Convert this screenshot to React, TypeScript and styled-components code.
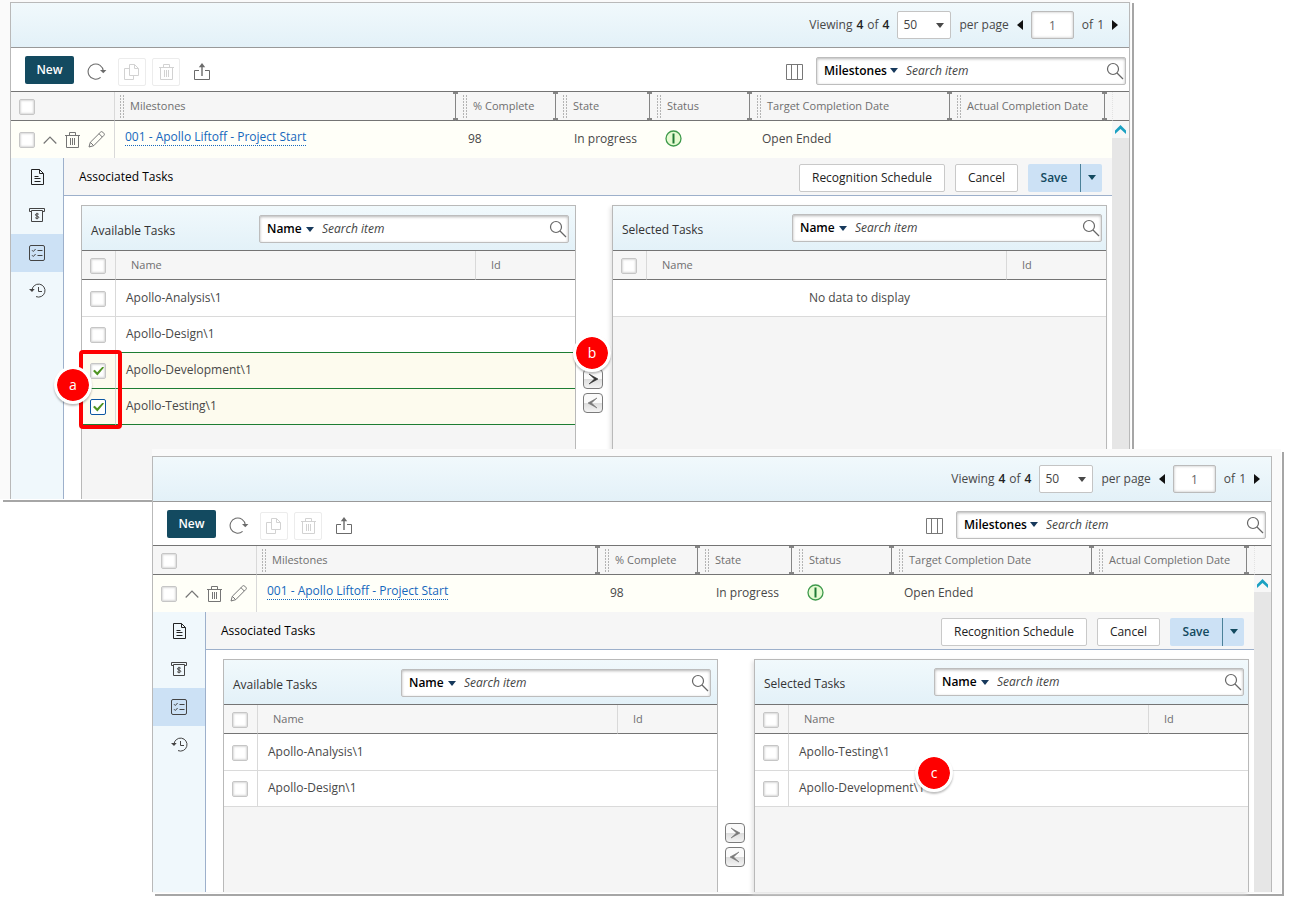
import React, { useId } from "react";
import styled, { createGlobalStyle, css } from "styled-components";

const GlobalStyle = createGlobalStyle`
  *, *::before, *::after { box-sizing: border-box; }
  body {
    margin: 0;
    background: #fff;
    color: #484848;
    font: 12px/16px "Open Sans", "Noto Sans", sans-serif;
  }
  button, input, select { font: inherit; color: inherit; margin: 0; }
  svg { display: block; flex: none; }
`;

/* ---------- page and windows ---------- */

const Stage = styled.main`
  display: flex;
  flex-direction: column;
  min-width: 1100px;
  padding-bottom: 14px;
`;

const Frame = styled.section<{ $front?: boolean }>`
  position: relative;
  background: #fafafa;
  box-shadow: 1px 1px 0 #fff, 3px 3px 0 #a6a6a6;
  margin: ${(p) => (p.$front ? "-50px 14px 0 152px" : "0 164px 0 0")};
  padding: ${(p) => (p.$front ? "7px 9px 1px 0" : "2px 1px 0 10px")};
`;

const Window = styled.div`
  background: #fff;
  border: 1px solid #b9b9b9;
  border-bottom: 0;
`;

const PagerBar = styled.div`
  display: flex;
  align-items: center;
  justify-content: flex-end;
  gap: 8px;
  height: 45px;
  padding: 0 11px;
  border-bottom: 1px solid #999;
  background: linear-gradient(#f1f9fc, #e3f1f8);
`;

const PagerText = styled.span`
  display: flex;
  gap: 4px;
  white-space: nowrap;
  b { font-weight: 600; color: #222; }
`;

const PageSize = styled.span`
  display: flex;
  align-items: center;
  width: 54px;
  height: 28px;
  padding: 0 6px 0 0;
  border: 1px solid #c4c4c4;
  border-radius: 2px;
  background: #fff;
`;

const PlainSelect = styled.select<{ $strong?: boolean; $width: number }>`
  appearance: none;
  width: ${(p) => p.$width}px;
  flex: none;
  border: 0;
  padding: 0 0 0 ${(p) => (p.$strong ? 7 : 5)}px;
  background: transparent;
  outline: none;
  font-weight: ${(p) => (p.$strong ? 600 : 400)};
  color: ${(p) => (p.$strong ? "#000" : "#444")};
`;

const PageInput = styled.input`
  width: 43px;
  height: 28px;
  border: 1px solid #bbb;
  border-radius: 2px;
  background: #fff;
  box-shadow: inset 0 0 3px #bbb;
  color: #666;
  text-align: center;
  padding: 0;
`;

const ArrowButton = styled.button`
  border: 0;
  padding: 0;
  background: none;
  color: #111;
`;

const Toolbar = styled.div<{ $inset: number }>`
  display: flex;
  align-items: center;
  height: 44px;
  padding: 0 ${(p) => p.$inset}px 0 14px;
  border-bottom: 1px solid #747474;
`;

const NewButton = styled.button`
  width: 49px;
  height: 28px;
  border: 0;
  border-radius: 2px;
  background: #134a60;
  color: #fff;
  font-weight: 600;
  padding: 0;
`;

const ToolGroup = styled.div`
  display: flex;
  align-items: center;
  gap: 6px;
  flex: 1;
  padding: 4px 0 0 7px;
`;

const ToolEnd = styled.div`
  display: flex;
  align-items: center;
  gap: 6px;
  padding-top: 2px;
`;

const ToolButton = styled.button<{ $framed?: boolean }>`
  display: flex;
  align-items: center;
  justify-content: center;
  width: ${(p) => (p.$framed ? 28 : 31)}px;
  height: 28px;
  padding: 0;
  border: 1px solid ${(p) => (p.$framed ? "#ececec" : "transparent")};
  border-radius: 2px;
  background: none;
  color: ${(p) => (p.$framed ? "#d2d2d2" : "#6b6b6b")};
`;

const ColumnsButton = styled(ToolButton)`
  padding-top: 2px;
  color: #777;
`;

const SearchBox = styled.div`
  display: flex;
  align-items: center;
  width: 310px;
  height: 28px;
  border: 1px solid #bdbdbd;
  border-radius: 2px;
  background: #fff;
  box-shadow: inset 0 1px 3px #b5b5b5;
  padding-right: 1px;
  color: #17395c;
`;

const SearchInput = styled.input`
  flex: 1;
  min-width: 0;
  border: 0;
  outline: none;
  background: transparent;
  padding: 0 0 0 8px;
  &::placeholder { color: #444; font-style: italic; opacity: 1; }
`;

const SearchButton = styled.button`
  border: 0;
  padding: 0;
  background: none;
  color: #666;
`;

/* ---------- milestones table ---------- */

const DataTable = styled.table`
  width: 100%;
  table-layout: fixed;
  border-collapse: separate;
  border-spacing: 0;
  th, td { padding: 0; text-align: left; font-weight: 400; }
`;

const HeadCell = styled.th<{ $handle?: boolean; $ruled?: boolean }>`
  position: relative;
  height: 29px;
  background: #f6f6f6;
  color: #6f6f6f;
  font-size: 11px;
  border-bottom: 1px solid #747474;
  ${(p) => p.$ruled && css`border-right: 1px solid #d9d9d9;`}
  ${(p) => p.$handle && css`
    border-right: 1px solid #858585;
    &::before, &::after {
      content: "";
      position: absolute;
      right: -3px;
      width: 5px;
      height: 2px;
      background: #858585;
      z-index: 1;
    }
    &::before { top: 0; }
    &::after { bottom: 0; }
  `}
`;

const HeadLabel = styled.div<{ $first?: boolean }>`
  display: flex;
  align-items: center;
  gap: 5px;
  padding-left: ${(p) => (p.$first ? 5 : 7)}px;
  white-space: nowrap;
`;

const ScrollHead = styled(HeadCell)`
  border-left: 1px dotted #e2e2e2;
`;

const RowCell = styled.td<{ $pad?: number; $ruled?: boolean; $lift?: number }>`
  && {
    padding-left: ${(p) => p.$pad ?? 0}px;
    padding-bottom: ${(p) => p.$lift ?? 2}px;
  }
  height: 37px;
  background: #fffff8;
  white-space: nowrap;
  ${(p) => p.$ruled && css`border-right: 1px solid #d9d9d9;`}
`;

const RowActions = styled.div`
  display: flex;
  align-items: center;
  gap: 8px;
  padding: 2px 0 0 8px;
  color: #777;
`;

const RowAction = styled.button`
  border: 0;
  padding: 0;
  background: none;
  color: #757575;
`;

const CheckCell = styled.div`
  padding: 2px 0 0 8px;
  display: flex;
`;

const CheckBox = styled.input<{ $focused?: boolean }>`
  appearance: none;
  flex: none;
  width: 16px;
  height: 16px;
  border: 1px solid ${(p) => (p.$focused ? "#0d57a3" : "#c6c6c6")};
  border-radius: 2px;
  background: #fff;
  box-shadow: ${(p) => (p.$focused ? "none" : "inset 0 0 2px 1px #d9d9d9")};
  &:checked::after {
    content: "";
    display: block;
    width: 11px;
    height: 9px;
    margin: 3px 0 0 2px;
    background: #4f9422;
    clip-path: polygon(0 50%, 16% 36%, 38% 64%, 88% 0, 100% 12%, 40% 100%);
  }
`;

const MilestoneLink = styled.a`
  display: inline-block;
  color: #1668bd;
  text-decoration: none;
  border-bottom: 1px dotted #1668bd;
  line-height: 16px;
`;

const ScrollTrack = styled.td`
  vertical-align: top;
  background: #e6e6e6;
`;

const ScrollUp = styled.button`
  display: flex;
  align-items: center;
  justify-content: center;
  width: 100%;
  height: 17px;
  padding: 0;
  border: 0;
  background: #f7f7f7;
  color: #1ba1c2;
`;

/* ---------- expanded detail ---------- */

const Detail = styled.div<{ $height: number }>`
  display: flex;
  height: ${(p) => p.$height}px;
`;

const SideNav = styled.nav`
  flex: none;
  width: 53px;
  background: #f0f8fc;
  border-right: 1px solid #9db0cb;
`;

const SideItem = styled.button<{ $active?: boolean }>`
  display: flex;
  align-items: center;
  justify-content: center;
  width: 100%;
  height: 38px;
  padding: 0;
  border: 0;
  background: ${(p) => (p.$active ? "#cce1f5" : "transparent")};
  color: #444;
`;

const DetailMain = styled.div`
  flex: 1;
  min-width: 0;
  display: flex;
  flex-direction: column;
`;

const DetailHead = styled.div`
  display: flex;
  align-items: center;
  gap: 10px;
  height: 38px;
  flex: none;
  padding: 2px 10px 0 15px;
  background: #f6f6f6;
  border-bottom: 1px solid #9db0cb;
`;

const DetailTitle = styled.h2`
  flex: 1;
  margin: 0;
  padding-bottom: 2px;
  font-size: 12px;
  font-weight: 400;
  color: #000;
`;

const ActionButton = styled.button`
  height: 28px;
  padding: 0 12px;
  border: 1px solid #c9c9c9;
  border-radius: 2px;
  background: #fff;
  color: #222;
  white-space: nowrap;
`;

const SplitButton = styled.div`
  display: flex;
  height: 28px;
  color: #134a60;
`;

const SaveButton = styled.button`
  width: 52px;
  border: 0;
  border-radius: 2px 0 0 2px;
  padding: 0;
  background: #cce1f5;
  font-weight: 600;
`;

const SaveMenu = styled.button`
  display: flex;
  align-items: center;
  justify-content: center;
  width: 22px;
  padding: 0;
  border: 0;
  border-left: 1px solid #4b8199;
  border-radius: 0 2px 2px 0;
  background: #cce1f5;
`;

const Lists = styled.div`
  flex: 1;
  display: grid;
  grid-template-columns: 1fr 36px 1fr;
  padding: 9px 5px 0 17px;
  background: #fff;
`;

const ListPanel = styled.section<{ $raised?: boolean }>`
  position: relative;
  min-width: 0;
  border: 1px solid #b9b9b9;
  border-bottom: 0;
  background: #f5f5f5;
  box-shadow: ${(p) => (p.$raised ? "-2px 2px 4px #e4e4e4" : "none")};
`;

const ListHead = styled.header<{ $raised?: boolean }>`
  display: flex;
  align-items: center;
  justify-content: space-between;
  height: 45px;
  padding: ${(p) => (p.$raised ? "0 4px 0 9px" : "2px 6px 0 9px")};
  border-bottom: 1px solid #747474;
  background: linear-gradient(#f1f9fc, #e3f1f8);
`;

const ListTitle = styled.h3`
  margin: 0;
  padding-top: 3px;
  font-size: 12px;
  font-weight: 400;
  color: #333;
  white-space: nowrap;
`;

const ListHeadText = styled.span`
  padding-left: 15px;
`;

const TaskRow = styled.tr<{ $picked?: boolean; $next?: boolean }>`
  td {
    height: 36px;
    padding-bottom: 2px;
    background: ${(p) => (p.$picked ? "#fdfbee" : "#fff")};
    border-bottom: 1px solid ${(p) => (p.$picked || p.$next ? "#1d7d33" : "#dadada")};
  }
  &&&:first-child td { height: 37px; padding-bottom: 0; }
`;

const TaskCheck = styled.td`
  border-right: 1px solid #d9d9d9;
`;

const TaskName = styled.td`
  && { padding-left: 10px; }
`;

const EmptyCell = styled.td`
  && { text-align: center; }
`;

const Transfer = styled.div`
  position: relative;
  display: flex;
  flex-direction: column;
  gap: 4px;
  padding: 164px 0 0 7px;
`;

const TransferButton = styled.button<{ $on?: boolean }>`
  display: flex;
  align-items: center;
  justify-content: center;
  width: 20px;
  height: 20px;
  padding: 0;
  border: 1px solid #7b7b7b;
  border-radius: 4px;
  background: linear-gradient(#fafafa 0 50%, #dcdcdc 50%, #f4f4f4);
  color: ${(p) => (p.$on ? "#333" : "#777")};
`;

/* ---------- callouts lying over the windows ---------- */

const Outline = styled.div`
  position: absolute;
  left: -3px;
  top: 144px;
  width: 43px;
  height: 79px;
  border: 4px solid #fe0000;
  border-radius: 4px;
  pointer-events: none;
`;

const Badge = styled.span<{ $left: number; $top: number }>`
  position: absolute;
  left: ${(p) => p.$left}px;
  top: ${(p) => p.$top}px;
  z-index: 2;
  display: flex;
  align-items: center;
  justify-content: center;
  width: 38px;
  height: 38px;
  border: 3px solid #fff;
  border-radius: 50%;
  background: #fe0000;
  background-clip: padding-box;
  box-shadow: 0 2px 2px rgba(0, 0, 0, 0.25);
  color: #fff;
  font-size: 14px;
`;

/* ---------- icons ---------- */

const Caret = () => (
  <svg width="8" height="5" viewBox="0 0 8 5"><path d="M0 0h8L4 5z" fill="currentColor" /></svg>
);

const line = { fill: "none", stroke: "currentColor", strokeWidth: 1 };

const RefreshIcon = () => (
  <svg width="20" height="18" viewBox="0 0 20 18">
    <path {...line} strokeWidth={1.1} d="M13.600 14.400A7.600 7.600 0 1 1 16.300 8" />
    <path d="M13 7h6.400L16.300 10.200z" fill="currentColor" />
  </svg>
);
const CopyIcon = () => (
  <svg width="16" height="16" viewBox="0 0 16 16" {...line}>
    <path d="M5.500.5h5l4 4v7h-9zM10.500.5v4h4M5.500 4.500h-5v11h9v-4" />
  </svg>
);
const TrashIcon = () => (
  <svg width="15" height="16" viewBox="0 0 15 16" {...line}>
    <path d="M0 3.500h15M4.500 3.500v-3h6v3M1.500 3.500v12h12v-12M5.500 6v7M7.500 6v7M9.500 6v7" />
  </svg>
);
const ShareIcon = () => (
  <svg width="18" height="17" viewBox="0 0 18 17" {...line}>
    <path d="M6 7.500H1.500v9h15v-9H12" />
    <path d="M9 13V3" strokeWidth={1.400} />
    <path d="M9 0l3.200 4.200H5.800z" fill="currentColor" stroke="none" />
  </svg>
);
const ColumnsIcon = () => (
  <svg width="17" height="16" viewBox="0 0 17 16" {...line}>
    <path d="M.5.5h16v15H.5zM5.500.5v15M11.500.5v15" />
  </svg>
);
const MagnifierIcon = () => (
  <svg width="18" height="18" viewBox="0 0 18 18" {...line} strokeWidth={1.2}>
    <circle cx="7" cy="7" r="5.500" />
    <path d="M11 11l6 6" />
  </svg>
);
const ChevronUpIcon = () => (
  <svg width="14" height="8" viewBox="0 0 14 8" {...line} strokeWidth={1.2}><path d="M.7 7.500L7 1.200l6.300 6.300" /></svg>
);
const PencilIcon = () => (
  <svg width="17" height="17" viewBox="0 0 17 17" {...line}>
    <path d="M1 16l1.300-4.700L12.500 1.200a1.600 1.600 0 0 1 2.300 0l1 1a1.600 1.600 0 0 1 0 2.300L5.700 14.700zM2.300 11.300l3.400 3.400M11 2.700L14.300 6" />
  </svg>
);
const StatusIcon = () => (
  <svg width="17" height="17" viewBox="0 0 17 17">
    <circle cx="8.500" cy="8.500" r="7.500" fill="#e6fbd2" stroke="#3f9a4c" strokeWidth="1.300" />
    <path d="M8.500 3.500v10" stroke="#1f7a35" strokeWidth="2" />
  </svg>
);
const DocumentIcon = () => (
  <svg width="13" height="16" viewBox="0 0 13 16" {...line} stroke="#222">
    <path d="M.5.5h8l4 4v11H.5zM8.500.5v4h4M3.500 7.500h4M3.500 9.500h6M3.500 12.500h6" />
  </svg>
);
const PaymentIcon = () => (
  <svg width="16" height="15" viewBox="0 0 16 15" {...line}>
    <path d="M2.500 3.500h-2v-3h15v3h-2M2.500 2.500h11v11h-11z" />
    <path d="M9.800 6.300C9.300 5.700 6.400 5.300 6.400 6.900c0 1.500 3.400.8 3.400 2.400 0 1.500-3 1.200-3.600.4M8 4.800v6.500" />
  </svg>
);
const ChecklistIcon = () => (
  <svg width="16" height="16" viewBox="0 0 16 16" {...line}>
    <rect x=".5" y=".5" width="15" height="15" rx="1.500" />
    <path d="M3 5.200l1.300 1.300L6.600 4M3 10.200l1.300 1.300L6.600 9M8.500 5.500h5M8.500 10.500h5" />
  </svg>
);
const HistoryIcon = () => (
  <svg width="17" height="16" viewBox="0 0 17 16" {...line}>
    <path d="M3 7.500A6.500 6.500 0 1 1 7 13.600M9.500 4v4.500H13" />
    <path d="M0 6l3 3 2.700-3z" fill="currentColor" stroke="none" />
  </svg>
);
const ScrollUpIcon = () => (
  <svg width="11" height="9" viewBox="0 0 11 9"><path d="M5.500 0L11 5.500V9L5.500 4 0 9V5.500z" fill="currentColor" /></svg>
);
const GripIcon = () => (
  <svg width="5" height="23" viewBox="0 0 5 23" shapeRendering="crispEdges">
    <path d="M.5 0v23M3.500 0v23" stroke="#b4b4b4" strokeDasharray="2 1" />
  </svg>
);
const Pointer = ({ flip }: { flip?: boolean }) => (
  <svg width="6" height="10" viewBox="0 0 6 10"><path d={flip ? "M0 0v10l6-5z" : "M6 0v10L0 5z"} fill="currentColor" /></svg>
);
const Angle = ({ back }: { back?: boolean }) => (
  <svg width="10" height="12" viewBox="0 0 10 12">
    <path d={back ? "M9 1L0 6l9 5-5.500-5z" : "M1 1l9 5-9 5 5.500-5z"} fill="currentColor" stroke="currentColor" strokeWidth=".6" />
  </svg>
);

/* ---------- parts ---------- */

function Search({ field, width }: { field: string; width: number }) {
  return (
    <SearchBox role="search">
      <PlainSelect $strong $width={width} aria-label="Search field" defaultValue={field}>
        <option>{field}</option>
      </PlainSelect>
      <Caret />
      <SearchInput type="text" aria-label="Search item" placeholder="Search item" />
      <SearchButton aria-label="Search"><MagnifierIcon /></SearchButton>
    </SearchBox>
  );
}

type Task = { name: string; picked?: boolean; focused?: boolean };

function TaskList({ title, tasks, raised, children }: {
  title: string; tasks: Task[]; raised?: boolean; children?: React.ReactNode;
}) {
  return (
    <ListPanel $raised={raised}>
      <ListHead $raised={raised}>
        <ListTitle>{title}</ListTitle>
        <Search field="Name" width={46} />
      </ListHead>
      <DataTable>
        <colgroup><col width="34" /><col /><col width="99" /></colgroup>
        <thead>
          <tr>
            <HeadCell $ruled><CheckCell><CheckBox type="checkbox" aria-label="Select all tasks" /></CheckCell></HeadCell>
            <HeadCell $ruled><ListHeadText>Name</ListHeadText></HeadCell>
            <HeadCell><ListHeadText>Id</ListHeadText></HeadCell>
          </tr>
        </thead>
        <tbody>
          {tasks.length === 0 && <TaskRow><EmptyCell colSpan={3}>No data to display</EmptyCell></TaskRow>}
          {tasks.map((t, i) => (
            <TaskRow key={t.name} $picked={t.picked} $next={tasks[i + 1]?.picked}>
              <TaskCheck>
                <CheckCell>
                  <CheckBox type="checkbox" aria-label={t.name} defaultChecked={t.picked} $focused={t.focused} />
                </CheckCell>
              </TaskCheck>
              <TaskName colSpan={2}>{t.name}</TaskName>
            </TaskRow>
          ))}
        </tbody>
      </DataTable>
      {children}
    </ListPanel>
  );
}

const columns = ["Milestones", "% Complete", "State", "Status", "Target Completion Date", "Actual Completion Date"];

type WindowProps = {
  inset: number;
  height: number;
  available: Task[];
  selected: Task[];
  canAdd?: boolean;
  availableMarks?: React.ReactNode;
  transferMarks?: React.ReactNode;
  selectedMarks?: React.ReactNode;
};

function MilestonesWindow(p: WindowProps) {
  const id = useId();
  return (
    <Window>
      <PagerBar>
        <PagerText>Viewing <b>4</b> of <b>4</b></PagerText>
        <PageSize>
          <PlainSelect id={id} $width={38} defaultValue="50"><option>50</option></PlainSelect>
          <Caret />
        </PageSize>
        <PagerText as="label" htmlFor={id}>per page</PagerText>
        <ArrowButton aria-label="Previous page"><Pointer /></ArrowButton>
        <PageInput type="text" aria-label="Page" defaultValue="1" />
        <PagerText><span>of</span><span>1</span></PagerText>
        <ArrowButton aria-label="Next page"><Pointer flip /></ArrowButton>
      </PagerBar>
      <Toolbar $inset={p.inset}>
        <NewButton>New</NewButton>
        <ToolGroup>
          <ToolButton aria-label="Refresh"><RefreshIcon /></ToolButton>
          <ToolButton $framed aria-label="Copy"><CopyIcon /></ToolButton>
          <ToolButton $framed aria-label="Delete"><TrashIcon /></ToolButton>
          <ToolButton aria-label="Export"><ShareIcon /></ToolButton>
        </ToolGroup>
        <ToolEnd>
          <ColumnsButton aria-label="Choose columns"><ColumnsIcon /></ColumnsButton>
          <Search field="Milestones" width={73} />
        </ToolEnd>
      </Toolbar>
      <DataTable>
        <colgroup>
          <col width="104" /><col /><col width="100" /><col width="94" /><col width="100" />
          <col width="200" /><col width="155" /><col width="7" /><col width="17" />
        </colgroup>
        <thead>
          <tr>
            <HeadCell $ruled><CheckCell><CheckBox type="checkbox" aria-label="Select all milestones" /></CheckCell></HeadCell>
            {columns.map((c, i) => (
              <HeadCell key={c} $handle><HeadLabel $first={i === 0}><GripIcon />{c}</HeadLabel></HeadCell>
            ))}
            <HeadCell />
            <ScrollHead />
          </tr>
        </thead>
        <tbody>
          <tr>
            <RowCell $ruled>
              <RowActions>
                <CheckBox type="checkbox" aria-label="Select milestone" />
                <RowAction aria-label="Collapse"><ChevronUpIcon /></RowAction>
                <RowAction aria-label="Delete milestone"><TrashIcon /></RowAction>
                <RowAction aria-label="Edit milestone"><PencilIcon /></RowAction>
              </RowActions>
            </RowCell>
            <RowCell $pad={10} $lift={4}><MilestoneLink href="#milestone">001 - Apollo Liftoff - Project Start</MilestoneLink></RowCell>
            <RowCell $pad={12}>98</RowCell>
            <RowCell $pad={18}>In progress</RowCell>
            <RowCell $pad={15}><StatusIcon /></RowCell>
            <RowCell $pad={12}>Open Ended</RowCell>
            <RowCell colSpan={2} />
            <ScrollTrack rowSpan={2}><ScrollUp aria-label="Scroll up"><ScrollUpIcon /></ScrollUp></ScrollTrack>
          </tr>
          <tr>
            <td colSpan={8}>
              <Detail $height={p.height}>
                <SideNav>
                  <SideItem aria-label="Details"><DocumentIcon /></SideItem>
                  <SideItem aria-label="Payments"><PaymentIcon /></SideItem>
                  <SideItem $active aria-label="Tasks"><ChecklistIcon /></SideItem>
                  <SideItem aria-label="History"><HistoryIcon /></SideItem>
                </SideNav>
                <DetailMain>
                  <DetailHead>
                    <DetailTitle>Associated Tasks</DetailTitle>
                    <ActionButton>Recognition Schedule</ActionButton>
                    <ActionButton>Cancel</ActionButton>
                    <SplitButton>
                      <SaveButton>Save</SaveButton>
                      <SaveMenu aria-label="More save options"><Caret /></SaveMenu>
                    </SplitButton>
                  </DetailHead>
                  <Lists>
                    <TaskList title="Available Tasks" tasks={p.available}>{p.availableMarks}</TaskList>
                    <Transfer>
                      <TransferButton $on={p.canAdd} aria-label="Add selected"><Angle /></TransferButton>
                      <TransferButton aria-label="Remove selected"><Angle back /></TransferButton>
                      {p.transferMarks}
                    </Transfer>
                    <TaskList raised title="Selected Tasks" tasks={p.selected}>{p.selectedMarks}</TaskList>
                  </Lists>
                </DetailMain>
              </Detail>
            </td>
          </tr>
        </tbody>
      </DataTable>
    </Window>
  );
}

export default function App() {
  return (
    <Stage>
      <GlobalStyle />
      <Frame>
        <MilestonesWindow
          inset={3}
          height={341}
          canAdd
          available={[
            { name: "Apollo-Analysis\\1" },
            { name: "Apollo-Design\\1" },
            { name: "Apollo-Development\\1", picked: true },
            { name: "Apollo-Testing\\1", picked: true, focused: true },
          ]}
          selected={[]}
          availableMarks={<><Outline /><Badge $left={-28} $top={160}>a</Badge></>}
          transferMarks={<Badge $left={-3} $top={129}>b</Badge>}
        />
      </Frame>
      <Frame $front>
        <MilestonesWindow
          inset={5}
          height={280}
          available={[{ name: "Apollo-Analysis\\1" }, { name: "Apollo-Design\\1" }]}
          selected={[{ name: "Apollo-Testing\\1" }, { name: "Apollo-Development\\1" }]}
          selectedMarks={<Badge $left={160} $top={94}>c</Badge>}
        />
      </Frame>
    </Stage>
  );
}
